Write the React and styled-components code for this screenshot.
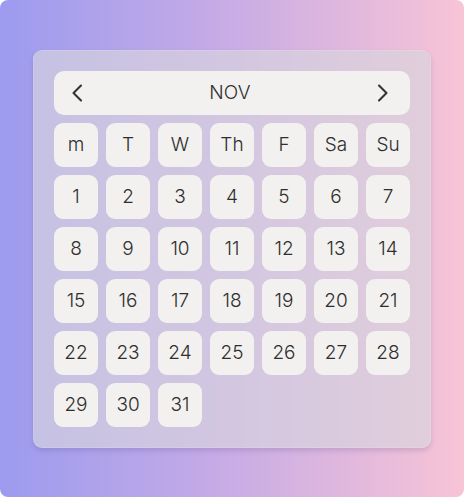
import React from "react";
import styled, { createGlobalStyle } from "styled-components";

const Global = createGlobalStyle`
  html, body { margin: 0; padding: 0; background: #ffffff; }
  #root { width: 464px; height: 497px; }
  * { box-sizing: border-box; }
`;

const Frame = styled.div`
  width: 464px;
  height: 497px;
  border-radius: 8px;
  background: linear-gradient(90deg, #9c9bef 0%, #c4aae6 45%, #f8c4d6 100%);
  display: flex;
  align-items: center;
  justify-content: center;
  font-family: Inter, "Noto Sans", sans-serif;
`;

const Panel = styled.div`
  width: 398px;
  padding: 20px;
  border-radius: 9px;
  border: 1px solid rgba(255, 255, 255, 0.12);
  background: rgba(216, 213, 222, 0.66);
  box-shadow: 0 3px 5px rgba(80, 60, 120, 0.18);
  display: flex;
  flex-direction: column;
  gap: 8px;
`;

const Header = styled.div`
  height: 44px;
  border-radius: 10px;
  background: #f2f1ef;
  display: flex;
  align-items: center;
  justify-content: space-between;
  padding: 0 19px 0 15px;
  color: #333333;
`;

const Title = styled.span`
  font-size: 19px;
  font-weight: 300;
  color: #2e2e2e;
  letter-spacing: 0.1px;
`;

const NavButton = styled.button`
  width: 16px;
  height: 24px;
  padding: 0;
  border: none;
  background: transparent;
  display: flex;
  align-items: center;
  justify-content: center;
  cursor: pointer;
  color: #333333;
`;

const Grid = styled.div`
  display: grid;
  grid-template-columns: repeat(7, 44px);
  grid-auto-rows: 44px;
  gap: 8px;
`;

const Cell = styled.div`
  border-radius: 9px;
  background: #f2f1ef;
  display: flex;
  align-items: center;
  justify-content: center;
  font-size: 19px;
  font-weight: 300;
  color: #2e2e2e;
`;

const Chevron = ({ dir }) => (
  <svg width="12" height="18" viewBox="0 0 12 18" fill="none">
    <polyline
      points={dir === "left" ? "10,1.5 2.5,9 10,16.5" : "2,1.5 9.5,9 2,16.5"}
      stroke="currentColor"
      strokeWidth="2.1"
      strokeLinecap="round"
      strokeLinejoin="round"
    />
  </svg>
);

const weekdays = ["m", "T", "W", "Th", "F", "Sa", "Su"];
const days = Array.from({ length: 31 }, (_, i) => i + 1);

export default function App() {
  return (
    <>
      <Global />
      <Frame>
        <Panel>
          <Header>
            <NavButton aria-label="Previous month">
              <Chevron dir="left" />
            </NavButton>
            <Title>NOV</Title>
            <NavButton aria-label="Next month">
              <Chevron dir="right" />
            </NavButton>
          </Header>
          <Grid>
            {weekdays.map((d) => (
              <Cell key={d}>{d}</Cell>
            ))}
            {days.map((d) => (
              <Cell key={d}>{d}</Cell>
            ))}
          </Grid>
        </Panel>
      </Frame>
    </>
  );
}
